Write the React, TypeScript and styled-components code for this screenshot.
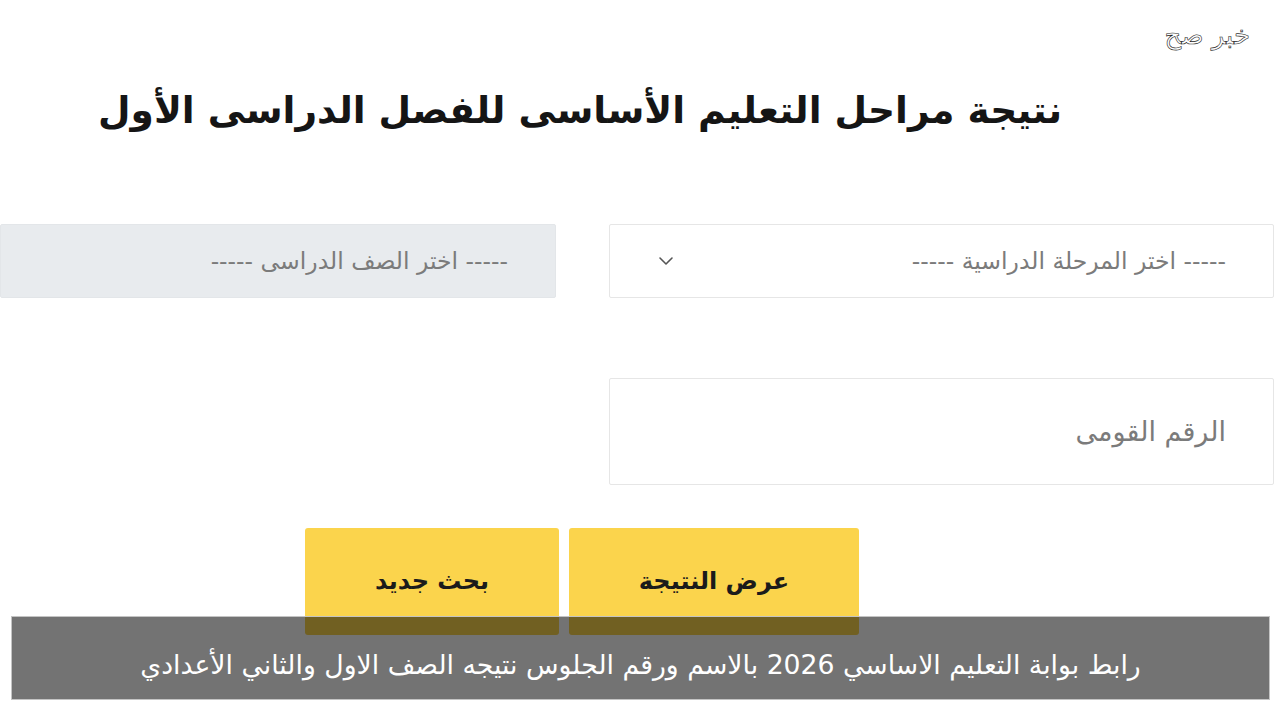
import React from 'react';
import styled, { createGlobalStyle } from 'styled-components';
import { ChevronDown } from 'lucide-react';

const GlobalStyle = createGlobalStyle`
  html, body {
    margin: 0;
    padding: 0;
    background: #ffffff;
  }
  * {
    box-sizing: border-box;
  }
`;

const Page = styled.div`
  position: relative;
  width: 1280px;
  height: 720px;
  overflow: hidden;
  direction: rtl;
  background: #ffffff;
  font-family: 'DejaVu Sans', 'Noto Sans', sans-serif;
  display: flex;
  flex-direction: column;
`;

const Watermark = styled.div`
  position: absolute;
  top: 20px;
  right: 30px;
  font-size: 26px;
  color: #ffffff;
  -webkit-text-stroke: 0.6px #222;
`;

const Title = styled.h1`
  margin: 78px 218px 0 0;
  font-size: 37.5px;
  font-weight: bold;
  line-height: 64px;
  color: #151515;
  white-space: nowrap;
`;

const SelectRow = styled.div`
  display: flex;
  gap: 53px;
  margin: 82px 6px 0 0;
`;

const Field = styled.div<{ $w: number; $h: number; $muted?: boolean }>`
  width: ${(p) => p.$w}px;
  height: ${(p) => p.$h}px;
  flex: none;
  display: flex;
  align-items: center;
  justify-content: space-between;
  padding: 0 47px 0 38px;
  background: ${(p) => (p.$muted ? '#e8ebee' : '#ffffff')};
  border: 1px solid ${(p) => (p.$muted ? '#e3e6e9' : '#e6e6e6')};
  border-radius: 2px;
  color: #7b7b7b;
  font-size: ${(p) => (p.$h > 90 ? 27 : 23.5)}px;
`;

const Chevron = styled(ChevronDown)`
  color: #555;
  margin-left: 6px;
  flex: none;
`;

const InputRow = styled.div`
  display: flex;
  margin: 80px 6px 0 0;
`;

const ButtonRow = styled.div`
  display: flex;
  gap: 10px;
  margin: 43px 421px 0 0;
`;

const Button = styled.div<{ $w: number }>`
  width: ${(p) => p.$w}px;
  height: 107px;
  flex: none;
  display: flex;
  align-items: center;
  justify-content: center;
  padding-bottom: 2px;
  background: #fbd44c;
  border-radius: 3px;
  color: #1b1b1b;
  font-size: 24px;
  font-weight: bold;
`;

const Caption = styled.div`
  position: absolute;
  left: 11px;
  top: 616px;
  width: 1259px;
  height: 84px;
  display: flex;
  align-items: center;
  justify-content: center;
  padding-top: 12px;
  background: rgba(0, 0, 0, 0.55);
  border: 1px solid #c4c4c4;
  color: #ffffff;
  font-size: 26.7px;
`;

export default function App() {
  return (
    <Page>
      <GlobalStyle />
      <Watermark>خبر صح</Watermark>
      <Title>نتيجة مراحل التعليم الأساسى للفصل الدراسى الأول</Title>
      <SelectRow>
        <Field $w={665} $h={74}>
          <span>----- اختر المرحلة الدراسية -----</span>
          <Chevron size={24} strokeWidth={1.6} />
        </Field>
        <Field $w={556} $h={74} $muted>
          <span>----- اختر الصف الدراسى -----</span>
        </Field>
      </SelectRow>
      <InputRow>
        <Field $w={665} $h={107}>
          <span>الرقم القومى</span>
        </Field>
      </InputRow>
      <ButtonRow>
        <Button $w={290}>عرض النتيجة</Button>
        <Button $w={254}>بحث جديد</Button>
      </ButtonRow>
      <Caption>رابط بوابة التعليم الاساسي 2026 بالاسم ورقم الجلوس نتيجه الصف الاول والثاني الأعدادي</Caption>
    </Page>
  );
}
